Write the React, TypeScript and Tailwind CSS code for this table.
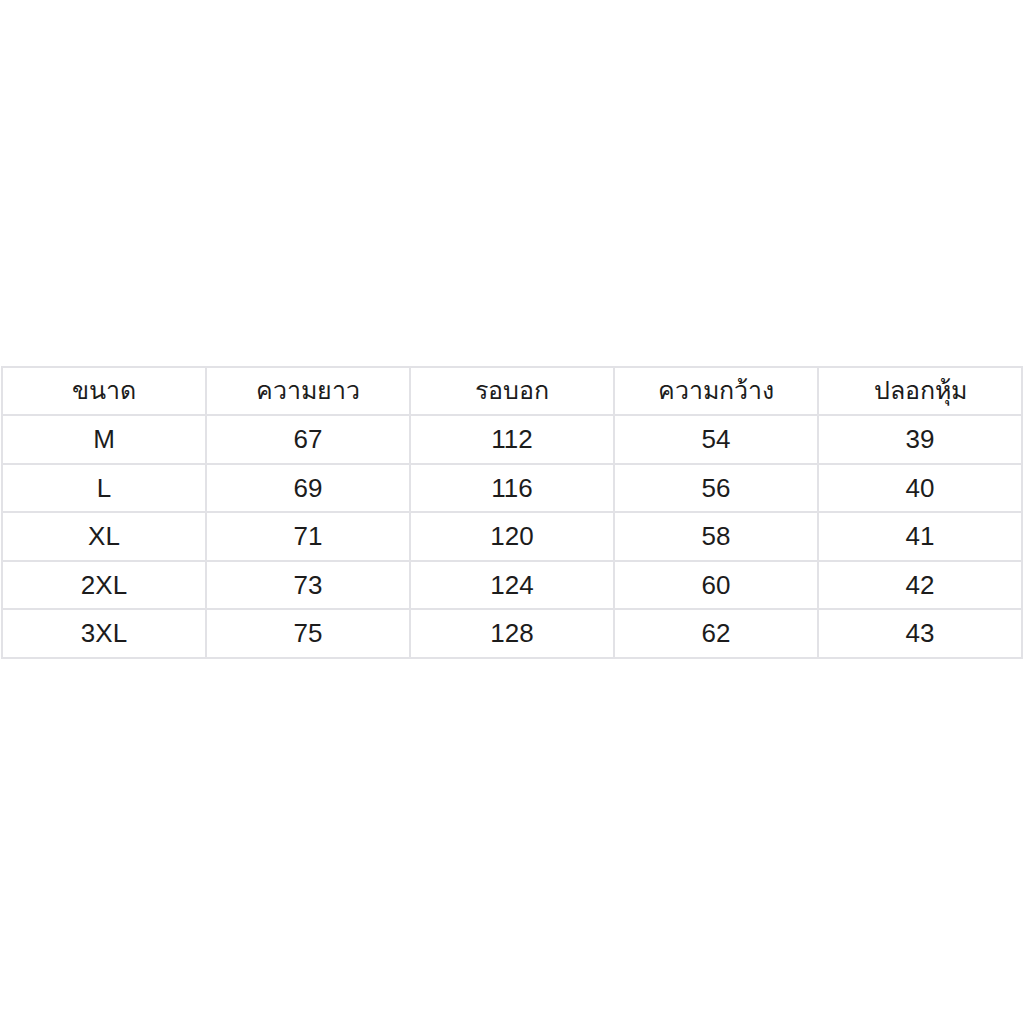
import React from 'react';

const headers = ['ขนาด', 'ความยาว', 'รอบอก', 'ความกว้าง', 'ปลอกหุ้ม'];

const rows: (string | number)[][] = [
  ['M', 67, 112, 54, 39],
  ['L', 69, 116, 56, 40],
  ['XL', 71, 120, 58, 41],
  ['2XL', 73, 124, 60, 42],
  ['3XL', 75, 128, 62, 43],
];

export default function App() {
  return (
    <div className="w-[1024px] h-[1024px] bg-white flex items-center px-px font-['Liberation_Sans','Arial','Noto_Sans',sans-serif] text-[#1c1c1c]">
      <table className="w-full table-fixed border-collapse border-2 border-[#e2e2e6]">
        <thead>
          <tr>
            {headers.map((h) => (
              <th key={h} className="h-[48.5px] border-2 border-[#e2e2e6] text-center font-normal text-[25px] p-0">
                {h}
              </th>
            ))}
          </tr>
        </thead>
        <tbody>
          {rows.map((row) => (
            <tr key={row[0]}>
              {row.map((cell, i) => (
                <td key={i} className="h-[48.5px] border-2 border-[#e2e2e6] text-center text-[26px] leading-none p-0">
                  {cell}
                </td>
              ))}
            </tr>
          ))}
        </tbody>
      </table>
    </div>
  );
}
